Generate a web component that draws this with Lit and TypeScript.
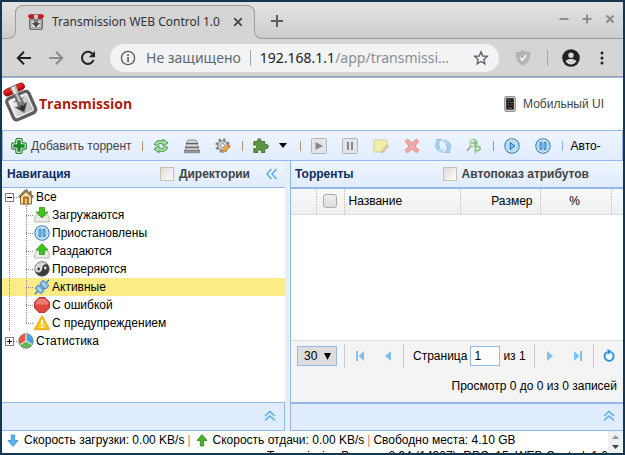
import { LitElement, html, css, svg } from "lit";
import { customElement, property } from "lit/decorators.js";
import { classMap } from "lit/directives/class-map.js";

const s16 = (body: unknown, size = 16) =>
  html`<svg width=${size} height=${size} viewBox="0 0 16 16" aria-hidden="true">${body}</svg>`;

const lever = svg`
  <rect x="1.700" y="4.800" width="12.600" height="10.600" rx="2" fill="#c9c9c6" stroke="#6d6d68" stroke-width="1.400"/>
  <path d="M4 7h8v6.500H4z" fill="#e9e9e7" stroke="#8a8a86" stroke-width=".6"/>
  <path d="M6.300 3h3.400v6H12l-4 4.500L4 9h2.300z" fill="#4b4b46"/>
  <path d="M7.400 3h1.200v5H7.400z" fill="#bdbdb9"/>
  <rect x=".5" y=".5" width="15" height="3.800" rx="1.700" fill="#d61a1a" stroke="#8c1010" stroke-width=".5"/>
  <rect x="6" y=".5" width="4" height="4.500" fill="#cfcfcf" stroke="#777" stroke-width=".4"/>`;

const blueDisc = svg`<circle cx="8" cy="8" r="7.200" fill="#eef8fe" stroke="#337fb9" stroke-width="1.100"/><circle cx="8" cy="8" r="5.300" fill="#c4e3f7" stroke="#83bbe2" stroke-width=".7"/>`;
const tray = svg`<path d="M2 8h12l1.300 3v4H.7v-4z" fill="#ebebe8" stroke="#aaa" stroke-width=".8"/>`;

const icons: Record<string, unknown> = {
  lever: s16(lever),
  back: s16(svg`<path d="M15 8H2M8 1.800 1.800 8 8 14.200" fill="none" stroke="#222" stroke-width="2"/>`),
  forward: s16(svg`<path d="M1 8h13M8 1.800 14.200 8 8 14.200" fill="none" stroke="#8c8c8c" stroke-width="2"/>`),
  reload: s16(svg`<path d="M13.600 10A6 6 0 1 1 12.400 3.800" fill="none" stroke="#222" stroke-width="2"/><path d="M15 1v6.200H8.800z" fill="#222"/>`),
  info: s16(svg`<circle cx="8" cy="8" r="6.600" fill="none" stroke="#5f6368" stroke-width="1.400"/><path d="M7.200 7h1.700v5H7.200zM7.200 4.200h1.700v1.700H7.200z" fill="#5f6368"/>`),
  star: s16(svg`<path d="M8 1.900 9.800 6l4.500.4-3.400 3 1 4.400L8 11.500l-3.900 2.300 1-4.400-3.400-3L6.200 6z" fill="none" stroke="#5f6368" stroke-width="1.400"/>`),
  shield: s16(svg`<path d="M8 .2C5.600 1.500 3 2 .6 2c0 7 2.400 11.300 7.400 13.900C13 13.300 15.400 9 15.400 2 13 2 10.400 1.500 8 .2z" fill="#b4b4b4"/><path d="m5 7.500 2.400 2.700L11.200 5" fill="none" stroke="#f4f4f4" stroke-width="1.700"/>`),
  person: s16(svg`<circle cx="8" cy="8" r="7.800" fill="#222"/><circle cx="8" cy="5.500" r="2.400" fill="#d5d5d5"/><path d="M3.200 11.200C4 9.400 6 8.900 8 8.900s4 .5 4.800 2.300A5.800 5.800 0 0 1 8 13.800a5.800 5.800 0 0 1-4.800-2.600z" fill="#d5d5d5"/>`, 18),
  dots: s16(svg`<circle cx="8" cy="3" r="1.500" fill="#222"/><circle cx="8" cy="8" r="1.500" fill="#222"/><circle cx="8" cy="13" r="1.500" fill="#222"/>`),
  close: s16(svg`<path d="m4.200 4.200 7.600 7.600m0-7.600-7.600 7.600" stroke="#444" stroke-width="1.700"/>`),
  plus: s16(svg`<path d="M8 2v12M2 8h12" stroke="#5c5c5c" stroke-width="2"/>`),
  winMin: s16(svg`<path d="M3.500 8h9" stroke="#8f8f8f" stroke-width="2"/>`),
  winMax: s16(svg`<path d="M3.500 8h9M8 3.500v9" stroke="#8f8f8f" stroke-width="2"/>`),
  winClose: s16(svg`<path d="m4.500 4.500 7 7m0-7-7 7" stroke="#8f8f8f" stroke-width="2.400"/>`),
  phone: s16(svg`<rect x="2.700" y=".6" width="10.600" height="14.800" rx="1.200" fill="#d0d0d0" stroke="#8a8a8a"/><rect x="4.200" y="2.200" width="7.600" height="11.400" fill="#1a1a1a"/><path d="M5.500 4h1.200M7.500 4h1.200" stroke="#69a93b"/><path d="M5.500 6.500h1.200M9.400 6.500h1.200" stroke="#b47a1d"/><path d="M7.500 6.500h1.200M5.500 9h1.200" stroke="#4973c4"/><path d="M7.500 9h1.200M9.400 9h1.200M6 12h4" stroke="#a6582d"/>`),
  add: s16(svg`<path d="M5.800.7h4.400l1 1v3.100h3.100l1 1v4.400l-1 1h-3.100v3.100l-1 1H5.800l-1-1v-3.100H1.700l-1-1V5.800l1-1h3.100V1.700z" fill="#fff" stroke="#2a8235" stroke-width="1.200"/><path d="M6.300 2.300h3.400v4h4v3.400h-4v4H6.300v-4h-4V6.300h4z" fill="#128a1b"/>`),
  refresh: s16(svg`<path d="M1.500 7C1.800 3.500 5 1.800 10 3V1.200l5 3.800-5 3.300V6C7 5.300 5 5.600 4 7.400z" fill="#a5e0a0" stroke="#368c42" stroke-width=".9"/><path d="M14.500 9c-.3 3.500-3.500 5.200-8.500 4v1.800L1 11l5-3.300V10c3 .7 5 .4 6-1.400z" fill="#a5e0a0" stroke="#368c42" stroke-width=".9"/>`),
  stack: s16(svg`<path d="M4 2h8l2 3.500H2z" fill="#d0d0d0" stroke="#808080" stroke-width=".8"/><path d="M3 6h10l1.800 3.200H1.200z" fill="#d8d8d8" stroke="#858585" stroke-width=".8"/><path d="M2.200 9.600h11.600l1.800 3H.4z" fill="#c6c6c6" stroke="#808080" stroke-width=".8"/><path d="M2 5.500h12M1.200 9.200h13.600" stroke="#5d5d5d" stroke-width="1.100"/><path d="M.4 12.600h15.200v2.200H.4z" fill="#999" stroke="#707070" stroke-width=".6"/>`),
  gear: s16(svg`<circle cx="7.500" cy="7.500" r="6" fill="none" stroke="#858585" stroke-width="2.400" stroke-dasharray="2.500 2.200"/><circle cx="7.500" cy="7.500" r="4.600" fill="#dcdcdc" stroke="#828282" stroke-width="1.200"/><circle cx="7.500" cy="7.500" r="2" fill="#fff" stroke="#888"/><path d="m7.500 14.500.7-3L13 6.300l2.200 2.100-5 5.200z" fill="#f0a63b" stroke="#c87420" stroke-width=".7"/><path d="m12 7.300 1.500-1.500 2.200 2.100-1.500 1.500z" fill="#e87060"/>`),
  puzzle: s16(svg`<path d="M.8 3.500h4c-.8-1.500 0-2.700 1.500-2.700S8.500 2 7.800 3.500h4v3.300c1.800-.8 3.600-.2 3.600 1.700s-1.800 2.500-3.600 1.700v4.300H8.200c.7-1.800-.3-2.600-1.700-2.600s-2.300.9-1.700 2.600h-4v-4.200c1.600.7 2.900 0 2.900-1.500S2.300 6.600.8 7.300z" fill="#5f9440" stroke="#396a20" stroke-width=".8"/>`),
  play: s16(svg`<rect x=".5" y=".5" width="15" height="15" rx="1" fill="#e3e4e8" stroke="#b2b4ba"/><path d="m4.500 4 7.500 4-7.500 4z" fill="#85878c"/>`),
  pause: s16(svg`<rect x=".5" y=".5" width="15" height="15" rx="1" fill="#e3e4e8" stroke="#b2b4ba"/><path d="M5 4h2v8H5zM9 4h2v8H9z" fill="#85878c"/>`),
  note: s16(svg`<path d="M1 2h13v8l-4 4H1z" fill="#f3ecaa" stroke="#d5cd91"/><path d="m8.500 14.700.6-2.500L14 6.800l1.600 1.400-4.900 5.500z" fill="#ecd8ab" stroke="#b3a58c" stroke-width=".7"/>`),
  remove: s16(svg`<path d="M3.500 1 8 5l4.500-4L15 3.500 11 8l4 4.500-2.500 2.500L8 11l-4.500 4L1 12.500 5 8 1 3.500z" fill="#f2a7a6" stroke="#dd8585" stroke-width=".8"/>`),
  sync: s16(svg`<path d="M1 1.500h5.500L5.200 3c-1.800 1.600-2 4.600-.2 7L2.500 12C-.3 9 0 5 2.300 2.900z" fill="#a9d2f0" stroke="#7ab2df" stroke-width=".7"/><path d="M15 14.500H9.500l1.300-1.500c1.800-1.600 2-4.600.2-7L13.500 4c2.800 3 2.500 7 .2 9.100z" fill="#a9d2f0" stroke="#7ab2df" stroke-width=".7"/><path d="M7.500 1c3 0 5 1.300 6 3l-2.500 2C10.500 5 9.500 4.500 7.500 4.500zM8.500 15c-3 0-5-1.300-6-3L5 10c.5 1 1.500 1.500 3.500 1.500z" fill="#b5d8f1"/>`),
  search: s16(svg`<circle cx="7.500" cy="5" r="3.700" fill="#eef7ee" stroke="#9dcda0" stroke-width="1.300"/><path d="m5 8-4 5" stroke="#a9a9a9" stroke-width="2"/><path d="M5 5h5M8 2.500 10.500 5 8 7.500" fill="none" stroke="#80bd80" stroke-width="1.300"/><path d="M9.500 15.500v-8m0 1h2.200c3.200 0 3.200 4.200 0 4.200H9.500" fill="none" stroke="#90c582" stroke-width="1.800"/>`),
  bluePlay: s16(svg`${blueDisc}<path d="m6.300 4.500 4.500 3.500-4.500 3.500z" fill="#84c4ee" stroke="#176bac"/>`),
  bluePause: s16(svg`${blueDisc}<path d="M5 4.500h2v7H5zM9 4.500h2v7H9z" fill="#84c4ee" stroke="#2278b8" stroke-width=".8"/>`),
  home: s16(svg`<path d="M2.500 7.500 8 2.500l5.500 5V15h-11z" fill="#f6dfaa" stroke="#8a672d"/><path d="M12 2h1.500v3H12z" fill="#8a5a3a"/><path d="M.8 8.200 8 1.300l7.200 6.900" fill="none" stroke="#6d5232" stroke-width="2"/><path d="M1 8 8 1.500 15 8" fill="none" stroke="#cbb392" stroke-width=".7"/><path d="M5.500 8h5v7h-5z" fill="#c47a23" stroke="#8c5515" stroke-width=".7"/><path d="M7.200 9.500h1.600V15H7.200z" fill="#efd098"/>`),
  down: s16(svg`${tray}<path d="M5.500.5h5V5H14L8 11 2 5h3.500z" fill="#3fc41f" stroke="#279210" stroke-width=".7"/>`),
  up: s16(svg`${tray}<path d="M5.500 11.500V7H2l6-6.500L14 7h-3.500v4.500z" fill="#3fc41f" stroke="#279210" stroke-width=".7"/>`),
  yin: s16(svg`<circle cx="8" cy="8" r="7.300" fill="#3c3c3c" stroke="#666" stroke-width=".8"/><path d="M1 8.500A7 7 0 0 1 13 3.200C10 2.800 8.300 4.500 8.300 7S6.500 11.500 4.500 11.500 1.300 10.500 1 8.500z" fill="#dadada"/><circle cx="4.700" cy="8" r="1.400" fill="#444"/><circle cx="11.300" cy="7" r="1.400" fill="#ddd"/>`),
  plug: s16(svg`<path d="m.8 15.200 4-4M11.200 4.800l4-4" stroke="#5183b0" stroke-width="1.500"/><g transform="rotate(-45 8 8)"><rect x="2" y="3.800" width="5.500" height="8.400" rx="2" fill="#85bfe9" stroke="#3677ad" stroke-width=".8"/><rect x="8.500" y="3.800" width="5.500" height="8.400" rx="2" fill="#85bfe9" stroke="#3677ad" stroke-width=".8"/><path d="M4.500 6v4M11.300 6v4" stroke="#d4ebfa"/><path d="M7.200 6.400h1.600M7.200 9.600h1.600" stroke="#3677ad"/></g>`),
  stop: s16(svg`<path d="M5 .6h6L15.400 5v6L11 15.400H5L.6 11V5z" fill="#e0463f" stroke="#b02a26"/><path d="M5.400 1.700h5.200l3.700 3.700v2H1.700v-2z" fill="#ec7d75"/>`),
  warn: s16(svg`<path d="M8 1.500 15 14.200H1z" fill="#ffd335" stroke="#f0b41c" stroke-width="2" stroke-linejoin="round"/><path d="M7.100 5h1.800v5H7.100zM7.100 11.200h1.800V13H7.100z" fill="#fff"/>`),
  pie: s16(svg`<circle cx="8" cy="8" r="7.300" fill="#5fba51" stroke="#777" stroke-width=".8"/><path d="M8 8V1a7 7 0 0 0-6 10.500z" fill="#ec5746"/><path d="M8 8V1a7 7 0 0 1 6 10.500z" fill="#4aa0e4"/><path d="M8 1v7l6 3.500M8 8l-6 3.500" fill="none" stroke="#fff"/>`),
  chevLeft: s16(svg`<path d="M7.500 3 3 8l4.500 5M12.500 3 8 8l4.500 5" fill="none" stroke="#54aee8" stroke-width="1.500"/>`),
  chevUp: s16(svg`<path d="M3 8l5-4.500L13 8M3 12.500 8 8l5 4.500" fill="none" stroke="#54aee8" stroke-width="1.500"/>`),
  first: s16(svg`<path d="M4 3h2v10H4zM12 3v10L6.500 8z" fill="#7fc1ed"/>`),
  prev: s16(svg`<path d="M11 3v10L5 8z" fill="#7fc1ed"/>`),
  next: s16(svg`<path d="M5 3v10l6-5z" fill="#7fc1ed"/>`),
  last: s16(svg`<path d="M10 3h2v10h-2zM4 3v10l5.500-5z" fill="#7fc1ed"/>`),
  reloadBlue: s16(svg`<path d="M10.500 4.300A4.600 4.600 0 1 1 6 4.100" fill="none" stroke="#2490dc" stroke-width="1.800"/><path d="M6.500.8v6l4.500-3z" fill="#2490dc"/>`),
  arrDown: s16(svg`<path d="M6.300 3h3.400v5.500H13L8 14.500 3 8.500h3.300z" fill="#5cb3ee" stroke="#2c7ec3" stroke-width=".7"/>`),
  arrUp: s16(svg`<path d="M6.300 14h3.400V8.500H13l-5-6-5 6h3.300z" fill="#4eb022" stroke="#2c7a10" stroke-width=".7"/>`),
  caret: html`<svg width="8" height="5" viewBox="0 0 8 5" aria-hidden="true"><path d="M0 0h8L4 5z" fill="#000"/></svg>`,
};

const base = css`
  * { box-sizing: border-box; }
  svg { display: block; flex: none; }
  button { font: inherit; color: inherit; background: none; border: 0; padding: 0; margin: 0; display: flex; align-items: center; flex: none; }
`;

@customElement("browser-chrome")
class BrowserChrome extends LitElement {
  static styles = [base, css`
    :host { display: block; flex: none; font: 12px/20px "Noto Sans", sans-serif; color: #333; }
    .strip { display: flex; height: 37px; background: linear-gradient(#e3e3e3, #dcdcdc 16px, #d5d5d5 16px); }
    .lead, .rest { border-bottom: 1px solid #9c9c9c; background: linear-gradient(#e3e3e3, #cdcdcd); clip-path: inset(8px 0 0 0); }
    .lead { width: 14px; border-right: 1px solid #9c9c9c; border-bottom-right-radius: 8px; }
    .tab { position: relative; width: 238px; margin-top: 3px; padding: 0 8px 0 12px; display: flex; align-items: center; gap: 8px; background: #d5d5d5; border-radius: 8px 8px 0 0; }
    .tab::before { content: ""; position: absolute; inset: 0 -1px auto; height: 10px; border: 1px solid #9c9c9c; border-bottom: 0; border-radius: 8px 8px 0 0; }
    .title { flex: 1; white-space: nowrap; }
    .rest { flex: 1; display: flex; align-items: center; padding: 0 5px 0 14px; border-left: 1px solid #9c9c9c; border-bottom-left-radius: 8px; }
    .rest button { margin-top: 2px; }
    .wins { display: flex; gap: 7px; margin-left: auto; padding-bottom: 4px; }
    .bar { display: flex; align-items: center; height: 38px; padding: 0 14px; background: #d5d5d5; border-bottom: 1px solid #a0a0a0; }
    .nav { display: flex; gap: 16px; }
    .url { flex: 1; min-width: 0; height: 28px; border-radius: 14px; background: #f1f3f4; display: flex; align-items: center; margin: 0 16px 0 14px; padding: 0 10px;
      font-size: 14px; white-space: nowrap; }
    .unsafe { color: #666a6e; margin-left: 10px; }
    .sep { width: 1px; height: 16px; background: #a2a5a8; margin: 0 9px; flex: none; }
    .address { flex: 1; color: #8b8f93; }
    .host { color: #222; }
    .tail { display: flex; align-items: center; }
    .tail .sep { margin: 0 14px 0 16px; }
    .dots { margin-left: 14px; margin-right: -1px; }
  `];
  render() {
    return html`
      <div class="strip">
        <div class="lead"></div>
        <div class="tab">${icons.lever}<span class="title">Transmission WEB Control 1.0</span><button aria-label="Закрыть вкладку">${icons.close}</button></div>
        <div class="rest">
          <button aria-label="Новая вкладка">${icons.plus}</button>
          <div class="wins">
            <button aria-label="Свернуть">${icons.winMin}</button>
            <button aria-label="Развернуть">${icons.winMax}</button>
            <button aria-label="Закрыть">${icons.winClose}</button>
          </div>
        </div>
      </div>
      <div class="bar">
        <div class="nav">
          <button aria-label="Назад">${icons.back}</button>
          <button aria-label="Вперёд">${icons.forward}</button>
          <button aria-label="Обновить">${icons.reload}</button>
        </div>
        <div class="url">${icons.info}<span class="unsafe">Не защищено</span><span class="sep"></span><span class="address"><span class="host">192.168.1.1</span>/app/transmissi…</span><button aria-label="В закладки">${icons.star}</button></div>
        <div class="tail">
          <button aria-label="Защита">${icons.shield}</button><span class="sep"></span>
          <button aria-label="Профиль">${icons.person}</button>
          <button class="dots" aria-label="Меню">${icons.dots}</button>
        </div>
      </div>`;
  }
}

interface Leaf { icon: string; label: string; active?: boolean; }

@customElement("nav-tree")
class NavTree extends LitElement {
  @property({ attribute: false }) items: Leaf[] = [
    { icon: "down", label: "Загружаются" },
    { icon: "bluePause", label: "Приостановлены" },
    { icon: "up", label: "Раздаются" },
    { icon: "yin", label: "Проверяются" },
    { icon: "plug", label: "Активные", active: true },
    { icon: "stop", label: "С ошибкой" },
    { icon: "warn", label: "С предупреждением" },
  ];
  static styles = [base, css`
    :host { display: block; }
    .row { display: flex; align-items: center; height: 18px; white-space: nowrap; padding-left: 3px; }
    .row.active { background: #fbec88; }
    .label { margin-left: 2px; }
    .box { width: 9px; height: 9px; border: 1px solid #808080; background: #fff; display: grid; place-items: center; flex: none; }
    .toggle { width: 13px; height: 18px; background: repeating-linear-gradient(90deg, #8a8a8a 0 1px, transparent 1px 2px) 9px 9px / 4px 1px no-repeat; }
    .line { width: 17px; height: 18px; flex: none;
      background: repeating-linear-gradient(#8a8a8a 0 1px, transparent 1px 2px) 4px 0 / 1px 100% no-repeat; }
    .branch { width: 12px; background: repeating-linear-gradient(#8a8a8a 0 1px, transparent 1px 2px) 4px 0 / 1px 100% no-repeat,
      repeating-linear-gradient(90deg, #8a8a8a 0 1px, transparent 1px 2px) 4px 9px / 8px 1px no-repeat; }
    .branch.end { background-size: 1px 10px, 8px 1px; }
  `];
  render() {
    const minus = html`<span class="box"><svg width="5" height="5"><path d="M0 2h5v1H0z"/></svg></span>`;
    const plus = html`<span class="box"><svg width="5" height="5"><path d="M0 2h5v1H0zM2 0h1v5H2z"/></svg></span>`;
    return html`
      <div class="row"><button class="toggle" aria-label="Свернуть">${minus}</button>${icons.home}<span class="label">Все</span></div>
      ${this.items.map((it, i) => html`
        <div class=${classMap({ row: true, active: !!it.active })}>
          <span class="line"></span><span class=${classMap({ line: true, branch: true, end: i === this.items.length - 1 })}></span>
          ${icons[it.icon]}<span class="label">${it.label}</span>
        </div>`)}
      <div class="row"><button class="toggle" aria-label="Развернуть">${plus}</button>${icons.pie}<span class="label">Статистика</span></div>`;
  }
}

@customElement("app-root")
class AppRoot extends LitElement {
  static styles = [base, css`
    :host { display: flex; flex-direction: column; height: 100vh; box-sizing: border-box; border: 2px solid #15374f; overflow: hidden;
      background: #fff; font: 12px/16px "Liberation Sans", sans-serif; color: #000; }
    .head { flex: none; height: 53px; border-top: 1px solid #95b8e7; display: flex; align-items: center; justify-content: space-between; padding-right: 19px; }
    .brand { display: flex; align-items: center; font: bold 14px/20px "Open Sans", sans-serif; color: #ac1f10; }
    .brand svg { margin-top: -4px; }
    .mobile { gap: 5px; color: #444; font-size: 12px; }
    .tools { flex: none; height: 31px; display: flex; align-items: center; gap: 8px; padding: 0 8px; border: 1px solid #95b8e7; background: linear-gradient(#eff5ff, #e0ecff); white-space: nowrap; overflow: hidden; }
    .add { gap: 4px; color: #444; margin-right: 2px; }
    .bar-sep { width: 1px; height: 10px; background: #b3906f; flex: none; }
    .bar-sep.cool { background: #8db2e3; }
    .group { display: flex; align-items: center; gap: 15px; margin: 0 3px 0 2px; }
    .group.thin { gap: 10px; margin-right: 5px; }
    .main { flex: 1; min-height: 0; display: grid; grid-template-columns: 283px minmax(0, 1fr); gap: 5px; background: #e6eef8; }
    .panel { display: flex; flex-direction: column; min-height: 0; background: #fff; }
    .panel.right { border-left: 1px solid #95b8e7; }
    .title { height: 27px; flex: none; display: flex; align-items: center; padding: 0 5px; background: linear-gradient(#eff5ff, #e0ecff); border-bottom: 1px solid #95b8e7; font-weight: bold; color: #0e2d5f; white-space: nowrap; }
    .right .title { border-bottom-width: 2px; height: 28px; padding-left: 4px; }
    .check { display: flex; align-items: center; gap: 5px; color: #444; margin-left: auto; }
    input[type="checkbox"] { appearance: none; width: 14px; height: 14px; margin: 0; border: 1px solid #c9c0ae; background: linear-gradient(135deg, #dedad6, #fff); flex: none; }
    .left .title button { margin-left: 14px; }
    .right .check { margin-right: 29px; }
    .body { flex: 1; min-height: 0; overflow: hidden; }
    table { width: 100%; border-collapse: collapse; table-layout: fixed; }
    th { height: 25px; padding: 0 4px; font-weight: normal; text-align: left; border-right: 1px dotted #bbb; border-bottom: 1px solid #ddd; background: linear-gradient(#f9f9f9, #efefef); }
    th:last-child { border-right: 0; }
    .num { text-align: right; padding-right: 7px; }
    .mid { text-align: center; padding-right: 6px; }
    th input[type="checkbox"] { display: block; margin: 0 auto; border: 1px solid #aaa; border-radius: 3px; background: linear-gradient(#eee, #ddd); }
    .c1 { width: 25px; } .c2 { width: 28px; } .c4 { width: 80px; } .c5 { width: 71px; } .c6 { width: 12px; }
    .pager { flex: none; background: #f4f4f4; border-top: 1px solid #ddd; padding: 2px 6px 6px; }
    .controls { display: flex; align-items: center; height: 26px; white-space: nowrap; }
    .pick { position: relative; display: flex; align-items: center; }
    select { appearance: none; width: 40px; height: 20px; padding: 0 6px; margin: 0; border: 1px solid #95b8e7; border-radius: 0; background: #ddd; font: inherit; color: #000; }
    .pick svg { position: absolute; right: 6px; pointer-events: none; }
    .vsep { width: 1px; height: 24px; background: #ccc; margin: 0 7px; flex: none; }
    .pages { display: flex; gap: 12px; }
    .page { display: flex; align-items: center; gap: 3px; margin-left: 2px; }
    input[type="text"] { width: 30px; height: 20px; border: 1px solid #95b8e7; padding: 0 3px; margin: 0; font: inherit; background: #fff; }
    .controls .to { margin-left: auto; }
    .info { display: flex; justify-content: flex-end; padding-top: 9px; height: 27px; }
    .foot { height: 29px; flex: none; display: flex; align-items: center; justify-content: flex-end; padding-right: 6px; background: #e0ecff; border: 1px solid #95b8e7; border-left: 0; }
    .foot button { margin-bottom: 2px; }
    .right .foot { border-top-width: 2px; border-right: 0; }
    .status { flex: none; height: 22px; display: flex; overflow: hidden; }
    .lines { flex: 1; padding: 1px 0 0 3px; white-space: nowrap; overflow: hidden; }
    .line { display: flex; align-items: center; gap: 3px; }
    .line.more { justify-content: flex-end; }
    .pipe { color: #a98c6c; }
    .spin { width: 15px; background: #f0f0f0; display: flex; flex-direction: column; align-items: center; justify-content: space-around; padding: 1px 0; }
  `];

  private tool(icon: string, label: string) {
    return html`<button aria-label=${label}>${icons[icon]}</button>`;
  }

  render() {
    return html`
      <browser-chrome></browser-chrome>
      <header class="head">
        <div class="brand">
          <svg width="37" height="44" viewBox="0 0 37 44" aria-hidden="true">
            <defs>
              <linearGradient id="plate" x2="1" y2="1"><stop stop-color="#fff"/><stop offset="1" stop-color="#a9a9a9"/></linearGradient>
              <linearGradient id="grip" y2="1" x2="0"><stop stop-color="#f33"/><stop offset="1" stop-color="#a00"/></linearGradient>
            </defs>
            <g transform="rotate(-24 18 24)">
              <rect x="6.500" y="14.500" width="24" height="23" rx="3.500" fill="url(#plate)" stroke="#5e5e5e" stroke-width="3.200"/>
              <rect x="9" y="17" width="19" height="18" rx="1.500" fill="none" stroke="#fff" stroke-width=".8"/>
              <path d="M13 19.500h3v6h-3.500l6 8 6-8H21v-6h3" fill="none" stroke="#777"/>
              <path d="M16.500 10h4.500v9l1 3-1 4h2.500L18.500 32l-5-6h2.500l1-4-1-3z" fill="#808080" stroke="#555" stroke-width=".7"/>
              <path d="M18 10h1.700v12H18z" fill="#cfcfcf"/>
              <path d="m13.500 26 3.500 1 1.500-2 1.500 2 3.500-1-5 6.500z" fill="#303030"/>
              <rect x="7.500" y="5" width="22" height="6.800" rx="3.400" fill="url(#grip)" stroke="#820909" stroke-width=".8"/>
              <path d="M15.500 5h6.500l-.8 8.500h-5z" fill="#c6c6c6" stroke="#777" stroke-width=".6"/>
              <path d="M17.500 5.500h1.500l-.3 7.500h-1z" fill="#f6f6f6"/>
            </g>
          </svg>
          <span>Transmission</span>
        </div>
        <button class="mobile">${icons.phone}<span>Мобильный UI</span></button>
      </header>
      <div class="tools">
        <button class="add">${icons.add}<span>Добавить торрент</span></button>
        <span class="bar-sep"></span>
        <div class="group">${this.tool("refresh", "Обновить")}${this.tool("stack", "Сервер")}${this.tool("gear", "Настройки")}</div>
        <span class="bar-sep"></span>
        <div class="group thin">${this.tool("puzzle", "Плагины")}${this.tool("caret", "Ещё")}</div>
        <span class="bar-sep"></span>
        <div class="group">${this.tool("play", "Старт")}${this.tool("pause", "Пауза")}${this.tool("note", "Переименовать")}${this.tool("remove", "Удалить")}${this.tool("sync", "Проверить")}${this.tool("search", "Больше пиров")}</div>
        <span class="bar-sep"></span>
        <div class="group">${this.tool("bluePlay", "Запустить все")}${this.tool("bluePause", "Остановить все")}</div>
        <span class="bar-sep cool"></span>
        <span>Авто-</span>
      </div>
      <div class="main">
        <section class="panel left">
          <div class="title"><span>Навигация</span><label class="check"><input type="checkbox">Директории</label>${this.tool("chevLeft", "Свернуть панель")}</div>
          <div class="body"><nav-tree></nav-tree></div>
          <div class="foot">${this.tool("chevUp", "Развернуть")}</div>
        </section>
        <section class="panel right">
          <div class="title"><span>Торренты</span><label class="check"><input type="checkbox">Автопоказ атрибутов</label></div>
          <div class="body">
            <table>
              <thead><tr><th class="c1"></th><th class="c2"><input type="checkbox" aria-label="Выбрать все"></th><th>Название</th><th class="c4 num">Размер</th><th class="c5 mid">%</th><th class="c6"></th></tr></thead>
            </table>
          </div>
          <div class="pager">
            <div class="controls">
              <span class="pick"><select aria-label="Записей на странице"><option>30</option></select><svg width="7" height="7" viewBox="0 0 7 7" aria-hidden="true"><path d="M0 0h7L3.500 7z"/></svg></span>
              <span class="vsep"></span>
              <span class="pages">${this.tool("first", "Первая")}${this.tool("prev", "Предыдущая")}</span>
              <span class="vsep"></span>
              <span class="page"><label for="page">Страница</label><input id="page" type="text" value="1"><span>из 1</span></span>
              <span class="vsep to"></span>
              <span class="pages">${this.tool("next", "Следующая")}${this.tool("last", "Последняя")}</span>
              <span class="vsep"></span>
              ${this.tool("reloadBlue", "Обновить")}
            </div>
            <div class="info">Просмотр 0 до 0 из 0 записей</div>
          </div>
          <div class="foot">${this.tool("chevUp", "Развернуть")}</div>
        </section>
      </div>
      <footer class="status">
        <div class="lines">
          <div class="line">${icons.arrDown}<span>Скорость загрузки: 0.00 KB/s</span><span class="pipe">|</span>${icons.arrUp}<span>Скорость отдачи: 0.00 KB/s</span><span class="pipe">|</span><span>Свободно места: 4.10 GB</span></div>
          <div class="line more">Transmission Версия: 2.94 (14307), RPC: 15, WEB Control: 1.0</div>
        </div>
        <div class="spin">
          <svg width="7" height="4" viewBox="0 0 7 4" aria-hidden="true"><path d="M0 4h7L3.500 0z" fill="#999"/></svg>
          <svg width="7" height="4" viewBox="0 0 7 4" aria-hidden="true"><path d="M0 0h7L3.500 4z" fill="#444"/></svg>
        </div>
      </footer>`;
  }
}
